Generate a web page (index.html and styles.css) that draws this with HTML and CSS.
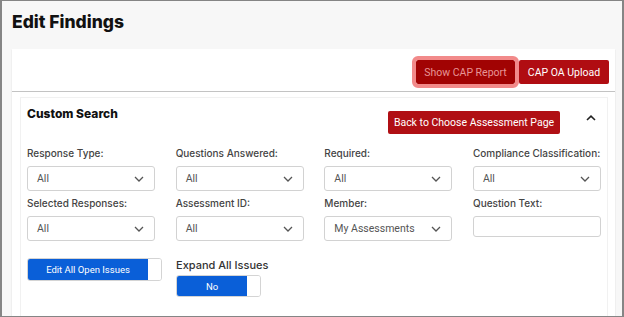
FILE: index.html
```html
<!DOCTYPE html>
<html lang="en">
<head>
    <meta charset="UTF-8">
    <meta name="viewport" content="width=device-width, initial-scale=1.0">
    <title>Edit Findings</title>
    <link rel="stylesheet" href="styles.css">
</head>
<body>
    <div class="frame">
        <h1 class="page-title">Edit Findings</h1>

        <div class="action-bar">
            <button class="btn btn-dark btn-focus">Show CAP Report</button>
            <button class="btn btn-upload">CAP OA Upload</button>
        </div>

        <div class="card">
            <div class="panel">
                <div class="panel-head">
                    <h2 class="panel-title">Custom Search</h2>
                    <div class="panel-tools">
                        <button class="btn btn-back">Back to Choose Assessment Page</button>
                        <svg class="collapse" width="10" height="6" viewBox="0 0 10 6">
                            <path d="M1 5 L5 1.2 L9 5" fill="none" stroke="#222" stroke-width="1.6"/>
                        </svg>
                    </div>
                </div>

                <div class="filters">
                    <div class="field">
                        <label>Response Type:</label>
                        <div class="select"><span>All</span><svg width="10" height="6" viewBox="0 0 10 6"><path d="M1 1 L5 5 L9 1" fill="none" stroke="#555" stroke-width="1.3"/></svg></div>
                    </div>
                    <div class="field">
                        <label>Questions Answered:</label>
                        <div class="select"><span>All</span><svg width="10" height="6" viewBox="0 0 10 6"><path d="M1 1 L5 5 L9 1" fill="none" stroke="#555" stroke-width="1.3"/></svg></div>
                    </div>
                    <div class="field">
                        <label>Required:</label>
                        <div class="select"><span>All</span><svg width="10" height="6" viewBox="0 0 10 6"><path d="M1 1 L5 5 L9 1" fill="none" stroke="#555" stroke-width="1.3"/></svg></div>
                    </div>
                    <div class="field">
                        <label>Compliance Classification:</label>
                        <div class="select"><span>All</span><svg width="10" height="6" viewBox="0 0 10 6"><path d="M1 1 L5 5 L9 1" fill="none" stroke="#555" stroke-width="1.3"/></svg></div>
                    </div>
                    <div class="field">
                        <label>Selected Responses:</label>
                        <div class="select"><span>All</span><svg width="10" height="6" viewBox="0 0 10 6"><path d="M1 1 L5 5 L9 1" fill="none" stroke="#555" stroke-width="1.3"/></svg></div>
                    </div>
                    <div class="field">
                        <label>Assessment ID:</label>
                        <div class="select"><span>All</span><svg width="10" height="6" viewBox="0 0 10 6"><path d="M1 1 L5 5 L9 1" fill="none" stroke="#555" stroke-width="1.3"/></svg></div>
                    </div>
                    <div class="field">
                        <label>Member:</label>
                        <div class="select"><span>My Assessments</span><svg width="10" height="6" viewBox="0 0 10 6"><path d="M1 1 L5 5 L9 1" fill="none" stroke="#555" stroke-width="1.3"/></svg></div>
                    </div>
                    <div class="field">
                        <label>Question Text:</label>
                        <div class="text-input"></div>
                    </div>
                </div>

                <div class="toggles">
                    <div class="toggle toggle-wide">
                        <span class="toggle-on">Edit All Open Issues</span>
                        <span class="toggle-knob"></span>
                    </div>
                    <div class="toggle-field">
                        <label>Expand All Issues</label>
                        <div class="toggle toggle-small">
                            <span class="toggle-on">No</span>
                            <span class="toggle-knob"></span>
                        </div>
                    </div>
                </div>
            </div>
        </div>
    </div>
</body>
</html>
```

FILE: styles.css
```css
html, body {
    margin: 0;
    padding: 0;
}
body {
    font-family: Inter, "Noto Sans", sans-serif;
    color: #333;
}
.frame {
    box-sizing: border-box;
    width: 624px;
    height: 317px;
    border: 1px solid #858585;
    border-left-width: 2px;
    border-right-width: 2px;
    background-color: #f7f7f7;
    padding: 0 7px 0 10px;
    overflow: hidden;
}
.page-title {
    margin: 0;
    padding-top: 11px;
    height: 48px;
    box-sizing: border-box;
    font-size: 17.5px;
    line-height: 20px;
    font-weight: 800;
    color: #111;
}
.action-bar {
    display: flex;
    justify-content: flex-end;
    gap: 4px;
    background: #fff;
    height: 42px;
    box-sizing: border-box;
    padding: 11px 6px 0 0;
    box-shadow: 0 1px 1px rgba(0,0,0,0.18);
}
.btn {
    font-family: Roboto, "Liberation Sans", sans-serif;
    font-size: 10.5px;
    height: 24px;
    padding: 0;
    border: none;
    border-radius: 2px;
    background-color: #b00d12;
    color: #fff;
    white-space: nowrap;
    cursor: pointer;
}
.btn-dark {
    background-color: #a10303;
    color: #e79595;
    width: 99px;
}
.btn-focus {
    outline: 4px solid #f28a8a;
}
.btn-upload {
    width: 90px;
}
.card {
    margin-top: 1px;
    background: #fff;
    height: 240px;
    padding: 5px 7px 0 8px;
    box-shadow: 0 0 1px rgba(0,0,0,0.2);
}
.panel {
    border: 1px solid #f1f1f1;
    border-bottom: none;
    height: 100%;
    box-sizing: border-box;
    padding: 0 6px 0 6px;
}
.panel-head {
    display: flex;
    justify-content: space-between;
    align-items: flex-start;
    height: 48px;
    padding-top: 8px;
    box-sizing: border-box;
}
.panel-title {
    margin: 0;
    font-size: 12px;
    font-weight: 800;
    color: #111;
    line-height: 16px;
}
.panel-tools {
    display: flex;
    align-items: flex-start;
    gap: 26px;
    padding-top: 5px;
}
.btn-back {
    height: 23px;
    width: 172px;
    background-color: #b00f14;
}
.collapse {
    margin-top: 4px;
    margin-right: 5px;
}
.filters {
    display: grid;
    grid-template-columns: repeat(4, 128px);
    justify-content: space-between;
    row-gap: 5px;
}
.field label,
.toggle-field label {
    display: block;
    font-size: 10px;
    line-height: 14px;
    font-weight: 500;
    color: #444;
    margin-bottom: 6px;
    white-space: nowrap;
}
.select {
    box-sizing: border-box;
    height: 25px;
    border: 1px solid #d2d2d2;
    border-radius: 3px;
    display: flex;
    align-items: center;
    justify-content: space-between;
    padding: 0 10px 0 9px;
    font-family: Roboto, "Liberation Sans", sans-serif;
    font-size: 10.5px;
    color: #555;
}
.text-input {
    box-sizing: border-box;
    height: 21px;
    border: 1px solid #d2d2d2;
    border-radius: 3px;
}
.toggles {
    display: grid;
    grid-template-columns: 135px 128px;
    column-gap: 14px;
    margin-top: 17px;
}
.toggle {
    box-sizing: border-box;
    display: flex;
    height: 23px;
    border: 1px solid #d4d4d4;
    border-radius: 3px;
    overflow: hidden;
    font-family: Roboto, "Liberation Sans", sans-serif;
    font-size: 9.5px;
    color: #fff;
}
.toggle-on {
    flex: 1;
    background-color: #0a5fd8;
    display: flex;
    align-items: center;
    justify-content: center;
}
.toggle-knob {
    width: 13px;
    background: #fff;
}
.toggle-small {
    width: 85px;
    height: 22px;
}
.toggle-field label {
    font-size: 11px;
    color: #333;
    margin-top: 0;
    margin-bottom: 3px;
}
```
